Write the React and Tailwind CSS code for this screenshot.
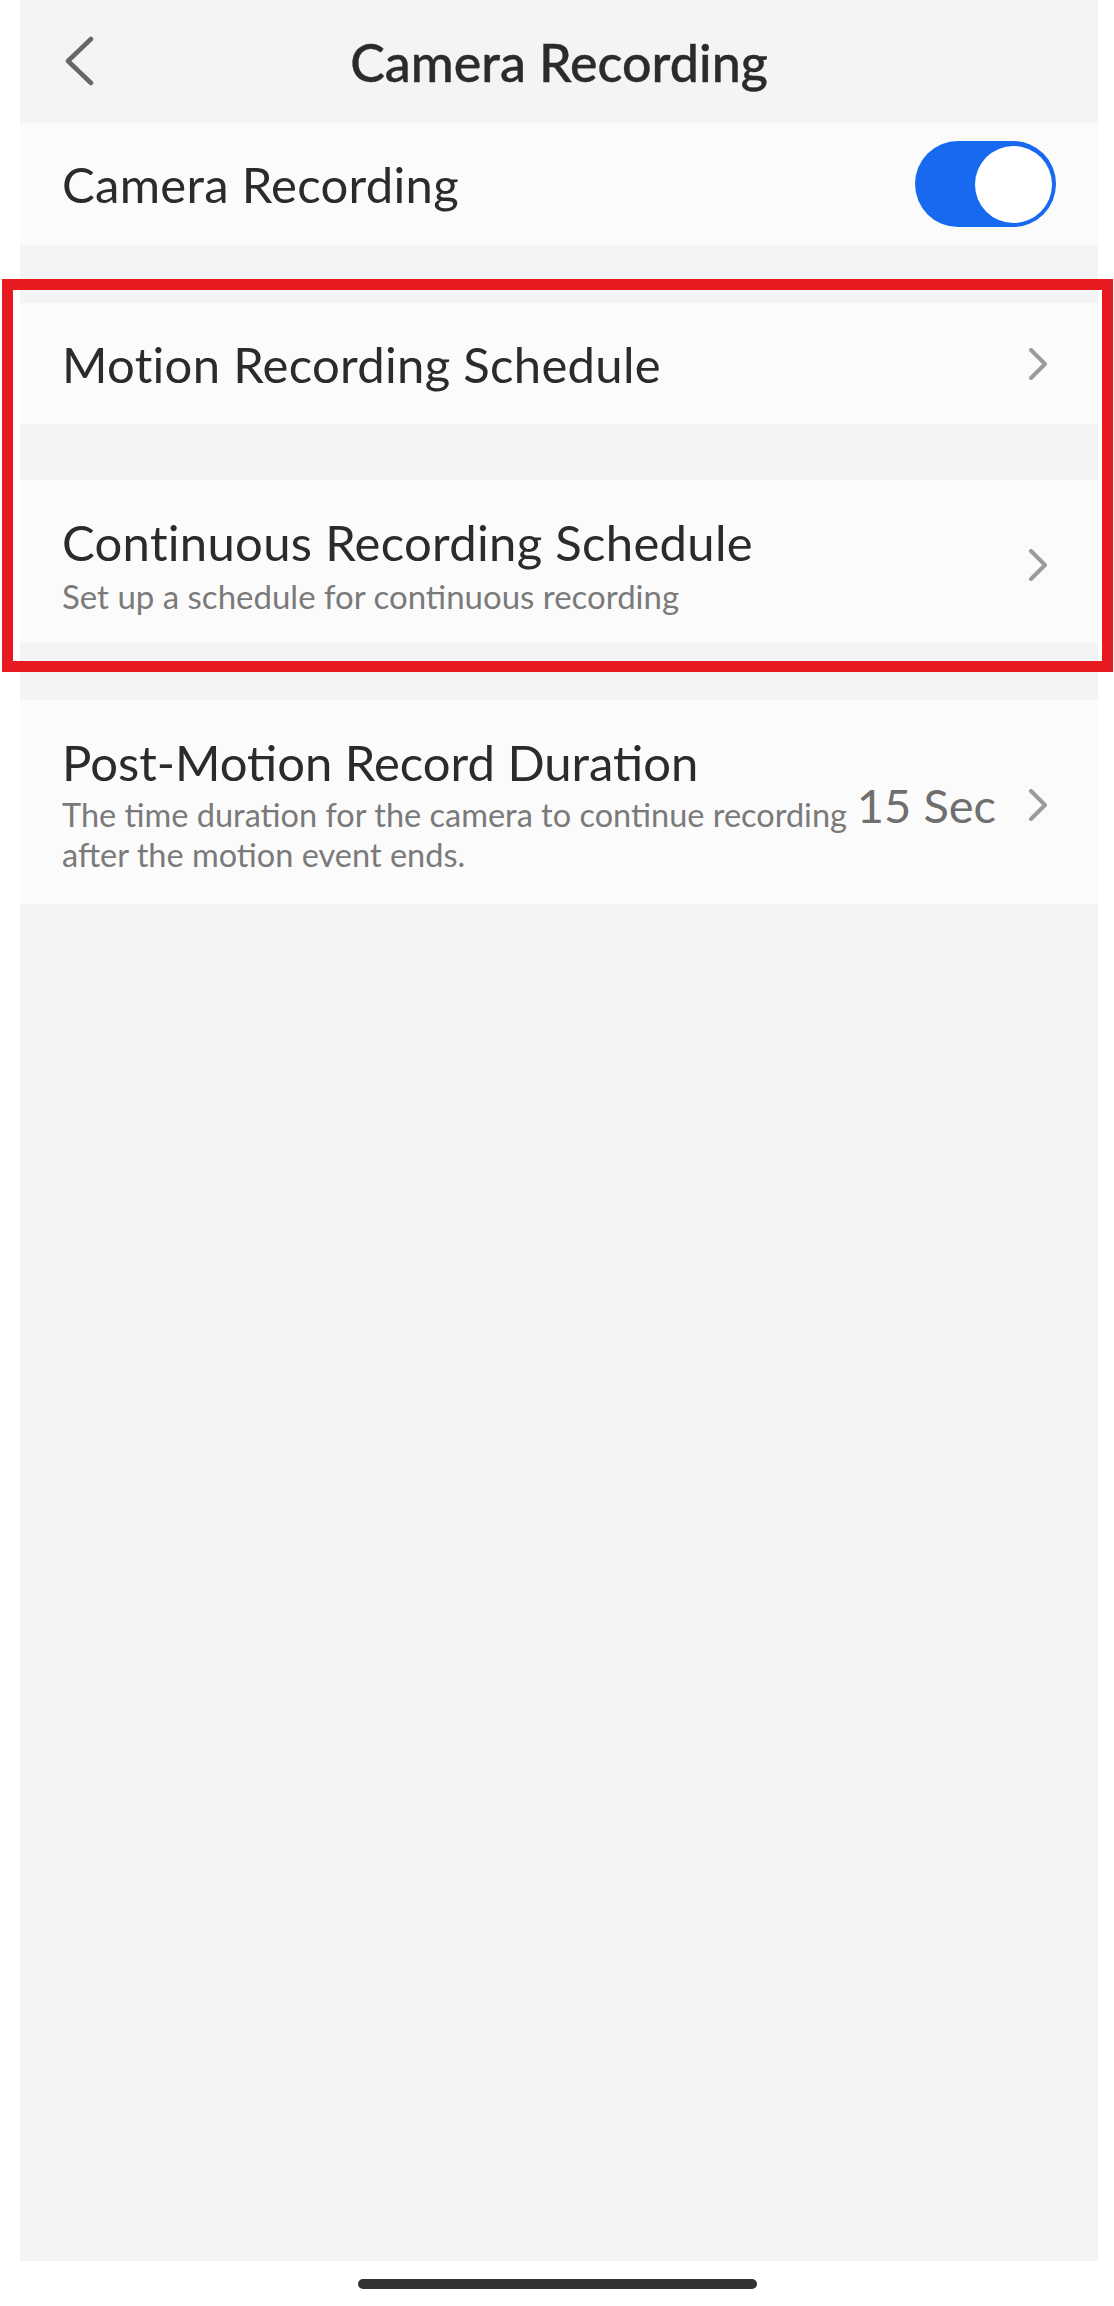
import React from "react";

const font = { fontFamily: "Lato, 'Noto Sans', 'Liberation Sans', sans-serif" };

function Chevron() {
  return (
    <svg width="20" height="32" viewBox="0 0 20 32" className="shrink-0">
      <polyline points="3,2 17,16 3,30" fill="none" stroke="#9a9aa0" strokeWidth="4" strokeLinecap="round" strokeLinejoin="round" />
    </svg>
  );
}

export default function App() {
  return (
    <div className="relative w-[1114px] h-[2306px] bg-white" style={font}>
      <div className="ml-[20px] w-[1078px] h-[2261px] bg-[#f3f4f6] flex flex-col">
        {/* Header */}
        <div className="relative h-[123px] flex items-center justify-center shrink-0">
          <svg width="30" height="50" viewBox="0 0 30 50" className="absolute left-[45px] top-[36px]">
            <polyline points="26,3 3,25 26,47" fill="none" stroke="#666666" strokeWidth="4.5" strokeLinecap="round" strokeLinejoin="round" />
          </svg>
          <div className="text-[52px] leading-[60px] font-medium text-[#2b2b2b] [-webkit-text-stroke:0.4px_#2b2b2b]">Camera Recording</div>
        </div>

        {/* Row 1 */}
        <div className="h-[122px] bg-[#fbfbfb] flex items-center justify-between pl-[42px] pr-[42px] shrink-0">
          <div className="text-[49px] leading-[56px] tracking-[0.3px] text-[#2b2b2b]">Camera Recording</div>
          <div className="w-[141px] h-[86px] rounded-full bg-[#1769f0] flex items-center justify-end pr-[4px]">
            <div className="w-[77px] h-[77px] rounded-full bg-white" />
          </div>
        </div>

        {/* Row 2 */}
        <div className="mt-[58px] h-[121px] bg-[#fbfbfb] flex items-center justify-between pl-[42px] pr-[50px] shrink-0">
          <div className="text-[49px] leading-[56px] tracking-[0.3px] text-[#2b2b2b]">Motion Recording Schedule</div>
          <Chevron />
        </div>

        {/* Row 3 */}
        <div className="mt-[56px] bg-[#fbfbfb] flex items-center justify-between pl-[42px] pr-[50px] pt-[34px] pb-[27px] shrink-0">
          <div className="flex flex-col gap-[6px]">
            <div className="text-[49px] leading-[56px] tracking-[0.3px] text-[#2b2b2b]">Continuous Recording Schedule</div>
            <div className="text-[33px] leading-[40px] text-[#7a7a7a]">Set up a schedule for continuous recording</div>
          </div>
          <Chevron />
        </div>

        {/* Row 4 */}
        <div className="mt-[57px] bg-[#fbfbfb] flex items-center pl-[42px] pr-[50px] pt-[34px] pb-[29px] shrink-0">
          <div className="flex-1 min-w-0 flex flex-col gap-[5px]">
            <div className="text-[49px] leading-[56px] text-[#2b2b2b]">Post-Motion Record Duration</div>
            <div className="text-[32.5px] leading-[40px] text-[#7a7a7a] whitespace-nowrap">
              The time duration for the camera to continue recording
              <br />
              after the motion event ends.
            </div>
          </div>
          <div className="ml-[8px] text-[47px] leading-[56px] text-[#6f6f6f] whitespace-nowrap">15 Sec</div>
          <div className="ml-[32px] flex items-center">
            <Chevron />
          </div>
        </div>
      </div>

      {/* Home indicator */}
      <div className="mt-[18px] mx-auto w-[399px] h-[10px] rounded-full bg-[#333333]" />

      {/* Red annotation box */}
      <div className="absolute left-[2px] top-[279px] w-[1111px] h-[393px] border-[11px] border-[#e61b1f]" />
    </div>
  );
}
